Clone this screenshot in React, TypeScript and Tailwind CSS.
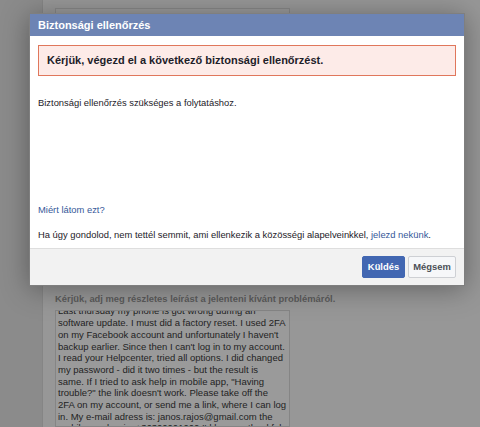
import React from "react";

const lines = [
  "Last thursday my phone is got wrong during an",
  "software update. I must did a factory reset. I used 2FA",
  "on my Facebook account and unfortunately I haven't",
  "backup earlier. Since then I can't log in to my account.",
  "I read your Helpcenter, tried all options. I did changed",
  "my password - did it two times - but the result is",
  "same. If I tried to ask help in mobile app, \"Having",
  "trouble?\" the link doesn't work. Please take off the",
  "2FA on my account, or send me a link, where I can log",
  "in. My e-mail adress is: janos.rajos@gmail.com the",
  "mobile number is: +36300001000 I'd be very thankful.",
];

export default function App() {
  return (
    <div className="relative w-[480px] h-[427px] overflow-hidden bg-[#8b8b8b] font-['Liberation_Sans',Arial,sans-serif]">
      {/* dimmed page behind */}
      <div className="flex h-full">
        <div className="w-[42px] shrink-0" />
        <div className="flex-1 bg-[#979797] border-l border-[#858585] pl-[12px] flex flex-col">
          <div className="mt-[-9px] text-[9.4px] leading-[11px] font-bold text-[#5a5a5a]">E-mail cím</div>
          <div className="mt-[6px] w-[235px] h-[24px] border border-[#878787] bg-[#999999]" />
          <div className="mt-[265px] text-[9.4px] leading-[11px] font-bold text-[#5b5b5b]">
            Kérjük, adj meg részletes leírást a jelenteni kívánt problémáról.
          </div>
          <div className="mt-[6px] w-[235px] h-[140px] border border-[#858585] bg-[#9a9a9a] overflow-hidden pl-[2px]">
            <div className="mt-[-5.8px] text-[9.5px] leading-[11.67px] text-[#1f1f1f] whitespace-nowrap">
              {lines.map((l, i) => (
                <div key={i}>{l}</div>
              ))}
            </div>
          </div>
        </div>
      </div>

      {/* dialog overlay */}
      <div className="absolute left-[29px] top-[13px] w-[436px] bg-white border border-[rgba(0,0,0,0.5)] shadow-[0_3px_26px_rgba(0,0,0,0.35)]">
        <div className="h-[22px] bg-[#6d84b4] flex items-center pl-[8px] text-white font-bold text-[11px]">
          Biztonsági ellenőrzés
        </div>
        <div className="px-[8px] pt-[9px] pb-[8px]">
          <div className="h-[31px] border border-[#e0775c] bg-[#fdebe8] flex items-center pl-[8px] text-[11px] font-bold text-[#1d2129]">
            Kérjük, végezd el a következő biztonsági ellenőrzést.
          </div>
          <div className="mt-[21px] text-[9.4px] leading-[11px] text-[#1d2129]">
            Biztonsági ellenőrzés szükséges a folytatáshoz.
          </div>
          <div className="mt-[96px] text-[9.4px] leading-[11px] text-[#365899]">Miért látom ezt?</div>
          <div className="mt-[14px] text-[9.4px] leading-[11px] text-[#1d2129]">
            Ha úgy gondolod, nem tettél semmit, ami ellenkezik a közösségi alapelveinkkel,{" "}
            <span className="text-[#365899]">jelezd nekünk</span>.
          </div>
        </div>
        <div className="h-[37px] bg-[#f2f2f2] border-t border-[#dedede] flex items-center justify-end gap-[3px] pr-[8px]">
          <div className="w-[43px] h-[22px] rounded-[2px] bg-[#4267b2] border border-[#4267b2] flex items-center justify-center text-white font-bold text-[9.4px]">
            Küldés
          </div>
          <div className="w-[48px] h-[22px] rounded-[2px] bg-[#f6f7f9] border border-[#ced0d4] flex items-center justify-center text-[#4b4f56] font-bold text-[9.4px]">
            Mégsem
          </div>
        </div>
      </div>
    </div>
  );
}
